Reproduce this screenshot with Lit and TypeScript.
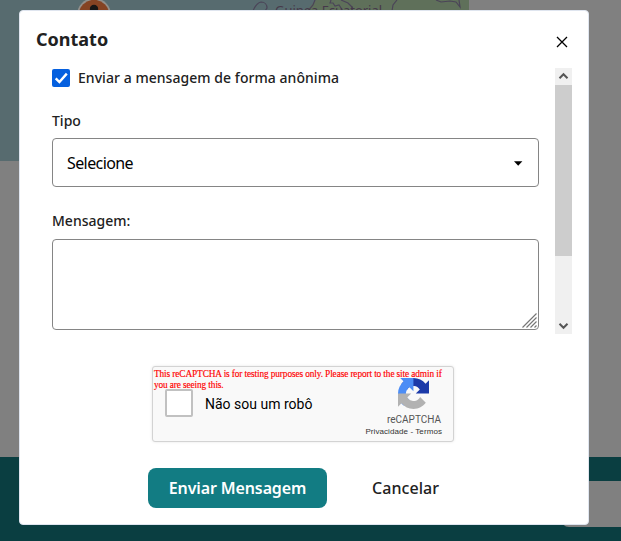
import { LitElement, html, css, svg } from "lit";
import { customElement, state } from "lit/decorators.js";

@customElement("map-backdrop")
class MapBackdrop extends LitElement {
  static styles = css`
    :host { display: grid; grid-template-rows: 161px 296px 84px; height: 541px; background: #808080; overflow: hidden; }
    .map { width: 469px; height: 161px; display: block; }
    .footer { grid-row: 3; background: #0a3e41; display: flex; justify-content: flex-end; }
    .panel { width: 60px; height: 46px; margin-top: 24px; background: #808080; border-radius: 8px 0 0 8px; }
    .place { font: 13px "Noto Sans", sans-serif; fill: #46394a; }
  `;
  render() {
    return html`
      <svg class="map" viewBox="0 0 469 161">
        <rect width="469" height="161" fill="#576b6f" />
        <path d="M316 0H469V161H306V11Z" fill="#5f705a" />
        <g fill="none" stroke="#4b4458" stroke-width="1.2">
          <path d="M253 11c2-5 4-8 8-9 4 0 6 3 6 6l-2 3M315 0l-2 5-5 6M331 0l-1 3h3l2 3 4-1 2 3 2 3M341 0l7 3 4 4v4M397 0l-4 5-1 6M436 0l5 2 9-1 6 1 4 5-1-7" />
        </g>
        <text class="place" x="275" y="15" textLength="107">Guinea Ecuatorial</text>
        <circle cx="94" cy="15" r="17" fill="#918f8b" />
        <circle cx="94" cy="15" r="15.2" fill="#854323" />
        <circle cx="94" cy="9" r="4.2" fill="#161616" />
      </svg>
      <div class="footer"><div class="panel"></div></div>
    `;
  }
}

@customElement("captcha-box")
class CaptchaBox extends LitElement {
  static styles = css`
    :host { display: block; box-sizing: border-box; width: 302px; height: 76px; border: 1px solid #d3d3d3; border-radius: 3px; background: #f9f9f9; box-shadow: 0 0 3px rgba(0,0,0,.1); position: relative; }
    .warning { position: absolute; left: 1px; top: 2px; margin: 0; white-space: nowrap; color: #f00; font: 9.3px/11px "Liberation Serif", serif; letter-spacing: -.11px; -webkit-text-stroke: .15px #f00; }
    .row { display: flex; height: 100%; }
    .box { box-sizing: border-box; width: 28px; height: 28px; margin: 22px 0 0 12px; border: 2px solid #c1c1c1; border-radius: 2px; background: #fff; flex: none; }
    .label { margin: 28px 0 0 12px; font: 14px/18px Roboto, sans-serif; color: #000; white-space: nowrap; flex: 1; }
    .brand { width: 78px; margin-right: 11px; padding-top: 11px; display: flex; flex-direction: column; align-items: flex-end; color: #555; }
    .logo { width: 31px; height: 31px; display: block; margin-right: 13px; }
    .name { font: 10px/12px Roboto, sans-serif; margin-top: 5px; margin-right: 1px; }
    .links { font: 8px/10px "Liberation Sans", sans-serif; letter-spacing: .08px; color: #333; margin-top: 1px; white-space: nowrap; }
  `;
  render() {
    return html`
      <div class="row">
        <div class="box"></div>
        <div class="label">Não sou um robô</div>
        <div class="brand">
          <svg class="logo" viewBox="0 0 64 64">
            <path d="M64 31.955l-.016-1.37V4.687l-7.16 7.16C50.964 4.674 42.033.093 32.05.093c-10.4 0-19.622 4.96-25.458 12.64l11.736 11.86a15.55 15.55 0 0 1 4.754-5.334c2.05-1.6 4.952-2.906 8.968-2.906.485 0 .86.057 1.135.163 4.976.393 9.288 3.14 11.828 7.124l-8.307 8.307L64 31.953" fill="#1c3aa9" />
            <path d="M31.862.094l-1.37.016H4.594l7.16 7.16C4.58 13.147 0 22.06 0 32.046c0 10.4 4.96 19.622 12.64 25.458L24.5 45.768a15.55 15.55 0 0 1-5.334-4.754c-1.6-2.05-2.906-4.952-2.906-8.968 0-.485.057-.86.163-1.135.393-4.976 3.14-9.288 7.124-11.828l8.307 8.307L31.86.095" fill="#4c8df6" />
            <path d="M.001 32.045l.016 1.37v25.898l7.16-7.16c5.873 7.173 14.79 11.754 24.776 11.754 10.4 0 19.622-4.96 25.458-12.64l-11.736-11.86a15.55 15.55 0 0 1-4.754 5.334c-2.05 1.6-4.952 2.906-8.968 2.906-.485 0-.86-.057-1.135-.163-4.976-.393-9.288-3.14-11.828-7.124l8.307-8.307L0 32.047" fill="#b2b2b2" />
          </svg>
          <div class="name">reCAPTCHA</div>
          <div class="links">Privacidade - Termos</div>
        </div>
      </div>
      <p class="warning">This reCAPTCHA is for testing purposes only. Please report to the site admin if<br />you are seeing this.</p>
    `;
  }
}

@customElement("app-root")
class AppRoot extends LitElement {
  @state() private anonymous = true;

  static styles = css`
    :host { display: block; position: relative; width: 621px; height: 541px; overflow: hidden; font-family: "Noto Sans", "Open Sans", sans-serif; color: #212121; }
    .dialog { position: absolute; left: 19px; top: 10px; box-sizing: border-box; width: 570px; height: 515px; background: #fff; border: 1px solid #dfe5ef; border-radius: 4px; display: flex; flex-direction: column; }
    .head { height: 57px; display: flex; justify-content: space-between; padding: 0 20px 0 16px; }
    h1 { margin: 15px 0 0; font-size: 18px; line-height: 27px; font-weight: 700; }
    .close { width: 12px; height: 12px; margin-top: 25px; display: block; }
    .scroll { height: 266px; display: flex; padding: 0 16px 0 32px; justify-content: space-between; }
    .form { width: 487px; }
    .check { display: flex; align-items: center; gap: 8px; height: 20px; font-size: 14px; line-height: 18px; font-weight: 500; letter-spacing: .05px; }
    .tick { width: 18px; height: 18px; display: block; }
    .label { display: block; font-size: 14px; line-height: 20px; font-weight: 500; white-space: nowrap; }
    .type { margin-top: 23px; }
    .select { box-sizing: border-box; height: 49px; margin-top: 7px; padding: 0 15px 0 14px; border: 1px solid #858585; border-radius: 4px; display: flex; align-items: center; justify-content: space-between; color: #000; font-size: 16px; letter-spacing: -.6px; }
    .caret { width: 9px; height: 5px; display: block; margin-top: 1px; }
    .msg { margin-top: 24px; }
    .area { box-sizing: border-box; height: 91px; margin-top: 8px; border: 1px solid #858585; border-radius: 4px; display: flex; justify-content: flex-end; align-items: flex-end; padding: 1px; }
    .grip { width: 15px; height: 15px; display: block; }
    .bar { width: 17px; height: 266px; background: #f0f0f0; display: flex; flex-direction: column; }
    .arrow { width: 17px; height: 17px; display: block; }
    .thumb { height: 171px; background: #cdcdcd; margin-bottom: 61px; }
    .captcha { margin: 32px 0 0 132px; }
    .actions { display: flex; margin: 26px 0 0 128px; gap: 45px; font-size: 16px; line-height: 40px; }
    .send { width: 179px; height: 40px; background: #127c83; color: #fff; border-radius: 8px; text-align: center; font-weight: 600; letter-spacing: -.12px; }
    .cancel { font-weight: 500; letter-spacing: .05px; }
  `;

  render() {
    return html`
      <map-backdrop></map-backdrop>
      <section class="dialog">
        <header class="head">
          <h1>Contato</h1>
          <svg class="close" viewBox="0 0 12 12"><path d="M1 1l10 10M11 1l-10 10" stroke="#000" stroke-width="1.3" /></svg>
        </header>
        <div class="scroll">
          <div class="form">
            <div class="check" @click=${() => (this.anonymous = !this.anonymous)}>
              <svg class="tick" viewBox="0 0 18 18">
                <rect width="18" height="18" rx="2" fill="#0560df" />
                ${this.anonymous ? svg`<path d="M3.7 9.4l3.7 3.7L14.8 4.6" fill="none" stroke="#fff" stroke-width="2.4" />` : null}
              </svg>
              <span>Enviar a mensagem de forma anônima</span>
            </div>
            <span class="label type">Tipo</span>
            <div class="select">
              <span>Selecione</span>
              <svg class="caret" viewBox="0 0 9 5"><path d="M0 .3h8.4L4.2 4.7z" /></svg>
            </div>
            <span class="label msg">Mensagem:</span>
            <div class="area">
              <svg class="grip" viewBox="0 0 15 15"><path d="M.5 14.5l14-14M4.5 14.5l10-10M8.5 14.5l6-6M12.5 14.5l2-2" stroke="#777" stroke-width="1.2" /></svg>
            </div>
          </div>
          <div class="bar">
            <svg class="arrow" viewBox="0 0 17 17"><path d="M4.5 10.2l4-4 4 4" fill="none" stroke="#555" stroke-width="2" /></svg>
            <div class="thumb"></div>
            <svg class="arrow" viewBox="0 0 17 17"><path d="M4.5 6.8l4 4 4-4" fill="none" stroke="#555" stroke-width="2" /></svg>
          </div>
        </div>
        <captcha-box class="captcha"></captcha-box>
        <div class="actions">
          <div class="send">Enviar Mensagem</div>
          <div class="cancel">Cancelar</div>
        </div>
      </section>
    `;
  }
}
